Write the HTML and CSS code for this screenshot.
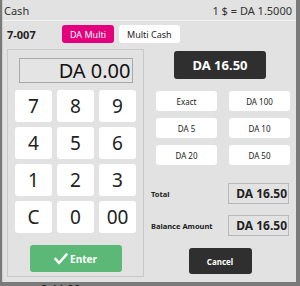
FILE: index.html
```html
<!DOCTYPE html>
<html lang="en">
<head>
    <meta charset="UTF-8">
    <meta name="viewport" content="width=device-width, initial-scale=1.0">
    <title>Cash</title>
    <link rel="stylesheet" href="styles.css">
</head>
<body>

    <div class="dialog">
        <div class="titlebar">
            <span class="title">Cash</span>
            <span class="rate">1 $ = DA 1.5000</span>
        </div>

        <div class="toprow">
            <span class="order-no">7-007</span>
            <button class="tab tab-active">DA Multi</button>
            <button class="tab">Multi Cash</button>
        </div>

        <div class="main">
            <div class="keypad-panel">
                <div class="display">DA 0.00</div>
                <div class="keys">
                    <button class="key">7</button>
                    <button class="key">8</button>
                    <button class="key">9</button>
                    <button class="key">4</button>
                    <button class="key">5</button>
                    <button class="key">6</button>
                    <button class="key">1</button>
                    <button class="key">2</button>
                    <button class="key">3</button>
                    <button class="key">C</button>
                    <button class="key">0</button>
                    <button class="key">00</button>
                </div>
                <button class="enter-btn">
                    <svg width="14" height="12" viewBox="0 0 14 12"><polyline points="1.5,6 5,10 12.5,1.5" fill="none" stroke="#fff" stroke-width="2.6" stroke-linecap="round" stroke-linejoin="round"/></svg>
                    Enter
                </button>
            </div>

            <div class="side">
                <div class="due">DA 16.50</div>
                <div class="quick">
                    <button class="quick-btn">Exact</button>
                    <button class="quick-btn">DA 100</button>
                    <button class="quick-btn">DA 5</button>
                    <button class="quick-btn">DA 10</button>
                    <button class="quick-btn">DA 20</button>
                    <button class="quick-btn">DA 50</button>
                </div>
                <div class="sum-row first">
                    <span class="sum-label">Total</span>
                    <span class="sum-value">DA 16.50</span>
                </div>
                <div class="sum-row">
                    <span class="sum-label">Balance Amount</span>
                    <span class="sum-value">DA 16.50</span>
                </div>
                <button class="cancel-btn">Cancel</button>
            </div>
        </div>
    </div>

    <div class="behind">£ 44.00</div>

</body>
</html>
```

FILE: styles.css
```css
body {
    font-family: "Noto Sans", "Open Sans", sans-serif;
    margin: 0;
    width: 300px;
    height: 286px;
    overflow: hidden;
    background-color: #7a7a7a;
    color: #222;
}
button {
    font-family: inherit;
    border: none;
    padding: 0;
    cursor: pointer;
    white-space: nowrap;
}
.dialog {
    margin-left: 2px;
    width: 294px;
    height: 282px;
    background-color: #e2e2e2;
    border-left: 1px solid #cfcfcf;
    box-sizing: border-box;
}
.titlebar {
    height: 20px;
    display: flex;
    justify-content: space-between;
    align-items: center;
    padding: 0 4px 0 1px;
    border-bottom: 1px solid #f2f2f2;
    font-size: 11px;
    color: #333;
}
.toprow {
    display: flex;
    align-items: center;
    padding: 4px 0 0 4px;
    height: 18px;
}
.order-no {
    width: 55px;
    font-size: 11px;
    font-weight: bold;
}
.tab {
    height: 18px;
    padding: 0 8px;
    margin-right: 5px;
    background-color: #fff;
    border-radius: 3px;
    font-size: 9px;
    color: #222;
}
.tab-active {
    width: 52px;
    padding: 0;
    background-color: #e4007c;
    color: #fff;
}
.main {
    display: flex;
    margin-top: 6px;
}
.keypad-panel {
    margin-left: 4px;
    width: 137px;
    height: 228px;
    box-sizing: border-box;
    border: 1px solid #c9c9c9;
    display: flex;
    flex-direction: column;
    align-items: center;
}
.display {
    margin-top: 8px;
    width: 114px;
    height: 25px;
    box-sizing: border-box;
    border: 1px solid #a9a9a9;
    background-color: #e4e4e4;
    font-size: 20px;
    line-height: 23px;
    text-align: right;
    padding-right: 1px;
    color: #111;
}
.keys {
    margin-top: 7px;
    display: grid;
    grid-template-columns: repeat(3, 37px);
    grid-auto-rows: 32px;
    gap: 5px 5px;
}
.key {
    background-color: #fff;
    border-radius: 3px;
    font-size: 19px;
    color: #222;
}
.enter-btn {
    margin-top: 12px;
    width: 92px;
    height: 27px;
    border-radius: 3px;
    background-color: #5cb877;
    color: #fff;
    font-size: 10px;
    font-weight: bold;
    display: flex;
    align-items: center;
    justify-content: center;
    gap: 2px;
}
.side {
    margin-left: 7px;
    width: 138px;
    display: flex;
    flex-direction: column;
    align-items: center;
}
.due {
    margin-top: 2px;
    width: 92px;
    height: 28px;
    border-radius: 3px;
    background-color: #2f2f2f;
    color: #fff;
    font-size: 13px;
    font-weight: bold;
    display: flex;
    align-items: center;
    justify-content: center;
}
.quick {
    margin-top: 12px;
    margin-left: 6px;
    display: grid;
    grid-template-columns: 61px 61px;
    grid-auto-rows: 20px;
    gap: 7px 12px;
}
.quick-btn {
    background-color: #fff;
    border-radius: 3px;
    font-size: 8px;
    color: #222;
}
.sum-row {
    width: 138px;
    display: flex;
    justify-content: space-between;
    align-items: center;
    margin-top: 11px;
}
.sum-row.first {
    margin-top: 18px;
}
.sum-label {
    font-size: 7.5px;
    font-weight: bold;
    color: #222;
}
.sum-value {
    width: 61px;
    height: 21px;
    box-sizing: border-box;
    border: 1px solid #b9b9b9;
    background-color: #e2e2e2;
    font-size: 12px;
    font-weight: bold;
    line-height: 19px;
    text-align: right;
    padding-right: 1px;
}
.cancel-btn {
    margin-top: 12px;
    width: 63px;
    height: 26px;
    border-radius: 3px;
    background-color: #2f2f2f;
    color: #fff;
    font-size: 8px;
    font-weight: bold;
}
.behind {
    padding-left: 40px;
    font-size: 12px;
    line-height: 14px;
    margin-top: 1px;
    color: #111;
}
```
